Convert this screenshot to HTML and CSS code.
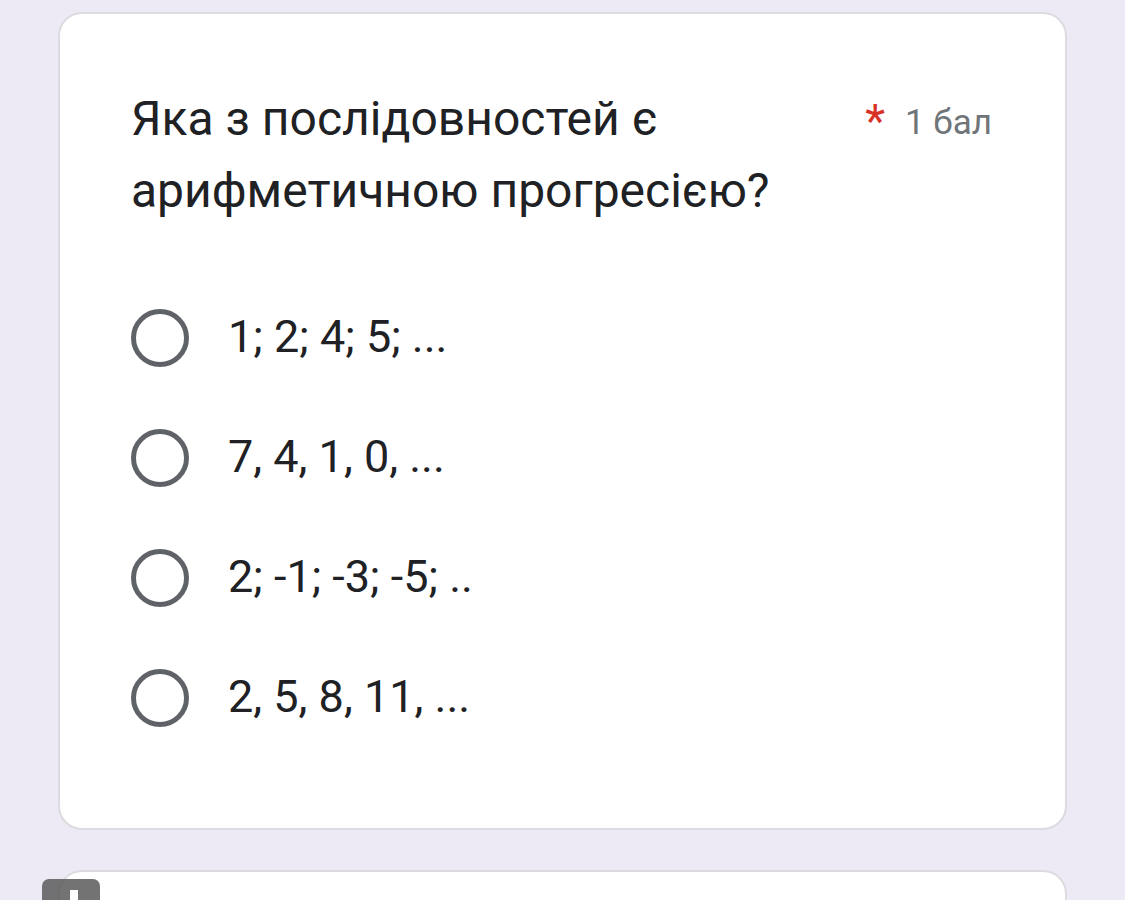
FILE: index.html
```html
<!DOCTYPE html>
<html lang="uk">
<head>
<meta charset="utf-8">
<title>Форма</title>
<link rel="stylesheet" href="styles.css">
</head>
<body>
<main class="page">
  <section class="card question-card">
    <div class="q-header">
      <div class="q-title">Яка з послідовностей є арифметичною прогресією?</div>
      <div class="q-meta"><span class="req">*</span><span class="points">1 бал</span></div>
    </div>
    <ul class="options">
      <li class="option"><span class="radio"></span><span class="opt-label">1; 2; 4; 5; ...</span></li>
      <li class="option"><span class="radio"></span><span class="opt-label">7, 4, 1, 0, ...</span></li>
      <li class="option"><span class="radio"></span><span class="opt-label">2; -1; -3; -5; ..</span></li>
      <li class="option"><span class="radio"></span><span class="opt-label">2, 5, 8, 11, ...</span></li>
    </ul>
  </section>
  <section class="card next-card"></section>
</main>
<div class="float-btn"><span class="float-bar"></span></div>
</body>
</html>
```
FILE: styles.css
```css
* { box-sizing: border-box; }
html, body { margin: 0; padding: 0; }
body {
  background: #edeaf6;
  font-family: Roboto, "Noto Sans", "Liberation Sans", sans-serif;
  color: #202124;
  width: 1125px;
  height: 900px;
  overflow: hidden;
  position: relative;
}
.page {
  padding: 12px 58px 0;
  display: flex;
  flex-direction: column;
  gap: 40px;
}
.card {
  background: #fff;
  border: 2px solid #dcdbe0;
  border-radius: 24px;
}
.question-card {
  height: 818px;
  padding: 84px 73px 0 71px;
}
.q-header {
  display: flex;
  align-items: flex-start;
  justify-content: space-between;
}
.q-title {
  font-size: 48px;
  line-height: 72px;
  margin-top: -15px;
  max-width: 720px;
}
.q-meta {
  display: flex;
  align-items: flex-start;
  gap: 20px;
}
.req {
  color: #d93025;
  font-size: 46px;
  line-height: 46px;
}
.points {
  color: #70757a;
  font-size: 35px;
  line-height: 46px;
  margin-top: 2px;
}
.options {
  list-style: none;
  margin: 82px 0 0;
  padding: 0;
  display: flex;
  flex-direction: column;
  gap: 62px;
}
.option {
  display: flex;
  align-items: center;
  height: 58px;
  gap: 39px;
}
.radio {
  width: 58px;
  height: 58px;
  border: 5px solid #5f6368;
  border-radius: 50%;
  flex: none;
}
.opt-label {
  font-size: 45px;
  line-height: 58px;
  margin-top: -2px;
}
.next-card {
  height: 120px;
}
.float-btn {
  position: absolute;
  left: 42px;
  top: 879px;
  width: 58px;
  height: 40px;
  border-radius: 7px;
  background: rgba(90, 90, 90, 0.85);
}
.float-bar {
  position: absolute;
  left: 28px;
  top: 11px;
  width: 8px;
  height: 30px;
  background: #fff;
}
```
